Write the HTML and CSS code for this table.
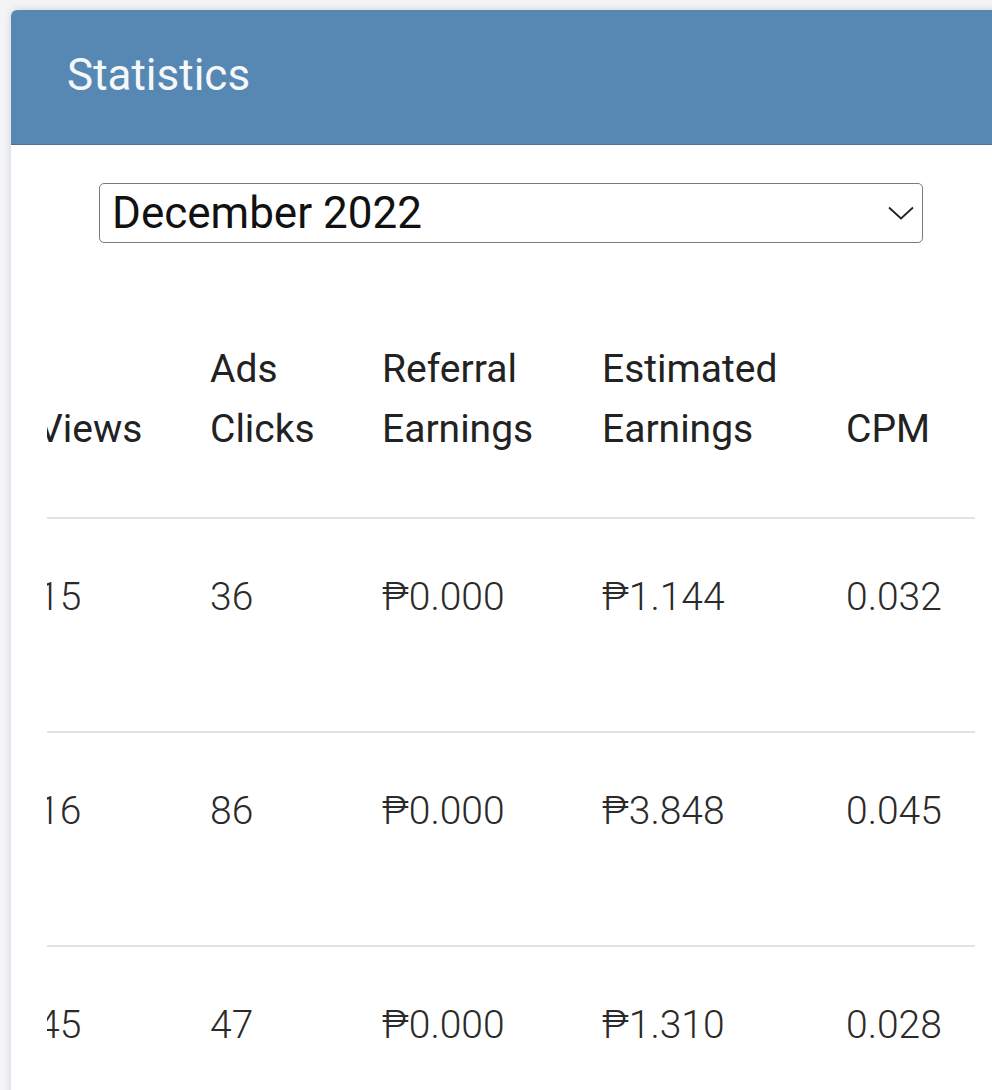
FILE: index.html
```html
<!DOCTYPE html>
<html lang="en">
<head>
<meta charset="utf-8">
<title>Statistics</title>
<link rel="stylesheet" href="styles.css">
</head>
<body>
<div class="card">
  <div class="card-header">
    <h1 class="card-title">Statistics</h1>
  </div>
  <div class="card-body">
    <div class="select-wrap">
      <select class="month-select">
        <option>December 2022</option>
        <option>November 2022</option>
        <option>October 2022</option>
      </select>
      <svg class="chevron" width="26" height="14" viewBox="0 0 26 14" aria-hidden="true">
        <polyline points="1,1.5 13,12.5 25,1.5" fill="none" stroke="#222" stroke-width="1.8" stroke-linejoin="miter"/>
      </svg>
    </div>
    <div class="table-scroll">
      <table class="stats">
        <colgroup>
          <col class="c-date">
          <col class="c-views">
          <col class="c-ads">
          <col class="c-ref">
          <col class="c-est">
          <col class="c-cpm">
        </colgroup>
        <thead>
          <tr>
            <th>Date</th>
            <th>Views</th>
            <th>Ads<br>Clicks</th>
            <th>Referral<br>Earnings</th>
            <th>Estimated<br>Earnings</th>
            <th>CPM</th>
          </tr>
        </thead>
        <tbody>
          <tr>
            <td>12-01</td>
            <td>15</td>
            <td>36</td>
            <td>₱0.000</td>
            <td>₱1.144</td>
            <td>0.032</td>
          </tr>
          <tr>
            <td>12-02</td>
            <td>16</td>
            <td>86</td>
            <td>₱0.000</td>
            <td>₱3.848</td>
            <td>0.045</td>
          </tr>
          <tr>
            <td>12-03</td>
            <td>45</td>
            <td>47</td>
            <td>₱0.000</td>
            <td>₱1.310</td>
            <td>0.028</td>
          </tr>
        </tbody>
      </table>
    </div>
  </div>
</div>
</body>
</html>
```

FILE: styles.css
```css
html, body {
  margin: 0;
  padding: 0;
}

body {
  background: #f3f4f6;
  font-family: Roboto, "Noto Sans", "DejaVu Sans", sans-serif;
  overflow: hidden;
  width: 992px;
  height: 1090px;
}

.card {
  margin: 10px 0 0 11px;
  width: 998px;
  background: #ffffff;
  border-radius: 6px 6px 0 0;
  box-shadow: 0 0 8px rgba(0, 0, 0, 0.14);
  min-height: 1100px;
}

.card-header {
  height: 134px;
  background: #5788b3;
  border-bottom: 1px solid #48739b;
  border-radius: 6px 6px 0 0;
  display: flex;
  align-items: center;
  padding-left: 56px;
}

.card-title {
  margin: 0;
  font-weight: 400;
  font-size: 44px;
  color: #f5f8fb;
  line-height: 1;
  padding-bottom: 4px;
}

.card-body {
  padding: 38px 34px 0 36px;
}

.select-wrap {
  position: relative;
  width: 824px;
  margin: 0 auto;
}

.month-select {
  display: block;
  width: 100%;
  height: 60px;
  margin: 0;
  padding: 0 50px 0 12px;
  border: 1.5px solid #7a7a7a;
  border-radius: 5px;
  background: #ffffff;
  font-family: Roboto, "Noto Sans", sans-serif;
  font-size: 44px;
  color: #111;
  appearance: none;
  -webkit-appearance: none;
  box-sizing: border-box;
}

.chevron {
  position: absolute;
  right: 9px;
  top: 23px;
  pointer-events: none;
}

.table-scroll {
  margin-top: 48px;
  overflow: hidden;
  width: 928px;
}

.stats {
  table-layout: fixed;
  border-collapse: collapse;
  width: 1095px;
  margin-left: -167px;
}

.c-date { width: 146px; }
.c-views { width: 172px; }
.c-ads { width: 172px; }
.c-ref { width: 220px; }
.c-est { width: 244px; }
.c-cpm { width: 141px; }

.stats th,
.stats td {
  text-align: left;
  font-size: 39px;
  line-height: 60px;
  white-space: nowrap;
  padding-left: 12px;
  padding-right: 12px;
}

.stats th {
  font-weight: 400;
  color: #222;
  vertical-align: bottom;
  padding-top: 48px;
  padding-bottom: 58px;
  border-bottom: 2px solid #e2e2e2;
}

.stats td {
  font-weight: 300;
  color: #2a2a2a;
  vertical-align: top;
  padding-top: 48px;
  padding-bottom: 104px;
  border-bottom: 2px solid #e2e2e2;
}
```
